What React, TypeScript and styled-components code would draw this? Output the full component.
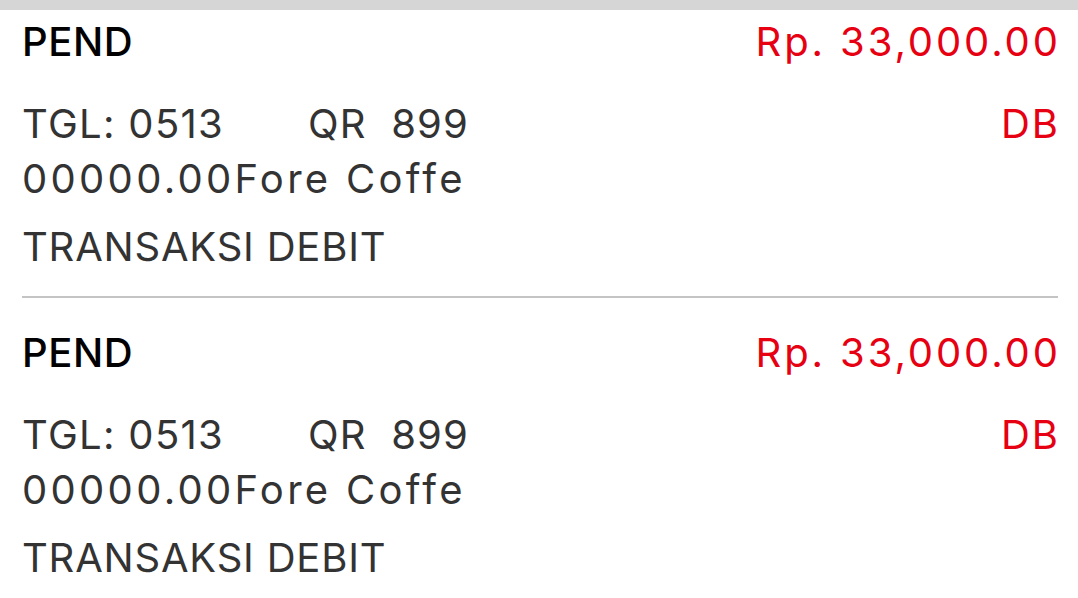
import React from "react";
import styled, { createGlobalStyle } from "styled-components";

const GlobalStyle = createGlobalStyle`
  html, body {
    margin: 0;
    padding: 0;
    background: #ffffff;
  }
  body {
    font-family: Inter, Roboto, "Liberation Sans", Arial, sans-serif;
    -webkit-font-smoothing: antialiased;
  }
`;

const TopBar = styled.div`
  height: 10px;
  background-color: #d6d6d6;
`;

const List = styled.div`
  padding: 0 20px 0 22px;
`;

const Item = styled.div`
  padding: 25px 0 22px;
  border-bottom: 2px solid #c4c4c4;

  &:first-child {
    padding-top: 2px;
  }

  &:last-child {
    border-bottom: none;
  }
`;

const HeaderRow = styled.div`
  display: flex;
  justify-content: space-between;
  align-items: center;
  height: 60px;
  line-height: 60px;
  margin-bottom: 24px;
`;

const Status = styled.span`
  font-size: 40px;
  font-weight: 500;
  letter-spacing: 0.6px;
  color: #000000;
`;

// letter-spacing widens the text; negative margin keeps the right edge flush
const Amount = styled.span`
  font-size: 40px;
  letter-spacing: 2.9px;
  margin-right: -2.9px;
  color: #e60012;
`;

const InfoRow = styled.div`
  display: flex;
  justify-content: space-between;
  line-height: 55px;
  font-size: 40px;
  color: #333333;
`;

const Cell = styled.span<{ $width?: number; $spacing?: number }>`
  display: inline-block;
  white-space: pre;
  width: ${(p) => (p.$width ? `${p.$width}px` : "auto")};
  letter-spacing: ${(p) => p.$spacing ?? 0}px;
`;

const Type = styled.span`
  letter-spacing: 2px;
  margin-right: -2px;
  color: #e60012;
`;

const Desc = styled.div`
  margin-top: 13px;
  line-height: 55px;
  font-size: 40px;
  letter-spacing: 0.8px;
  color: #333333;
`;

interface ITransaction {
  status: string;
  amount: string;
  date: string;
  ref: string;
  type: string;
  merchant: string;
  desc: string;
}

const transactions: ITransaction[] = [
  {
    status: "PEND",
    amount: "Rp. 33,000.00",
    date: "TGL: 0513",
    ref: "QR  899",
    type: "DB",
    merchant: "00000.00Fore Coffe",
    desc: "TRANSAKSI DEBIT",
  },
  {
    status: "PEND",
    amount: "Rp. 33,000.00",
    date: "TGL: 0513",
    ref: "QR  899",
    type: "DB",
    merchant: "00000.00Fore Coffe",
    desc: "TRANSAKSI DEBIT",
  },
];

const App: React.FC = () => {
  return (
    <>
      <GlobalStyle />
      <TopBar />
      <List>
        {transactions.map((t, i) => (
          <Item key={i}>
            <HeaderRow>
              <Status>{t.status}</Status>
              <Amount>{t.amount}</Amount>
            </HeaderRow>
            <InfoRow>
              <div>
                <Cell $width={286} $spacing={1.3}>
                  {t.date}
                </Cell>
                <Cell $spacing={1.1}>{t.ref}</Cell>
              </div>
              <Type>{t.type}</Type>
            </InfoRow>
            <InfoRow>
              <Cell $spacing={3.3}>{t.merchant}</Cell>
            </InfoRow>
            <Desc>{t.desc}</Desc>
          </Item>
        ))}
      </List>
    </>
  );
};

export default App;
